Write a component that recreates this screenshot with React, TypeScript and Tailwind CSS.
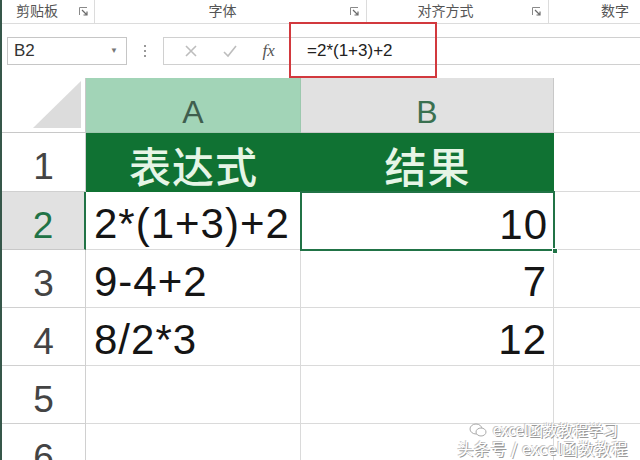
import React from "react";

const GRID = "border-r border-b border-[#dadada]";

function Launcher() {
  return (
    <svg width="9" height="9" viewBox="0 0 9 9" className="shrink-0">
      <path d="M0.5 8V0.5H8" fill="none" stroke="#8a8a8a" strokeWidth="1" />
      <path d="M3 3L8 8M8 4.5V8H4.5" fill="none" stroke="#6a6a6a" strokeWidth="1.2" />
    </svg>
  );
}

function RowHead({ n, active }: { n: number; active?: boolean }) {
  return (
    <div
      className={
        active
          ? "flex items-center justify-center pt-[10px] bg-[#e1e1e1] text-[#217346] border-b border-[#c8c8c8] border-r-2 border-r-[#217346] text-[37px]"
          : "flex items-center justify-center pt-[10px] bg-white text-[#444] border-r border-b border-[#d0d0d0] text-[37px]"
      }
    >
      {n}
    </div>
  );
}

function Cell({ children, right }: { children?: React.ReactNode; right?: boolean }) {
  return (
    <div
      className={`${GRID} flex items-center pt-[6px] text-[42px] tracking-[1px] text-[#151515] ${
        right ? "justify-end pr-[6px]" : "pl-[8px]"
      }`}
    >
      {children}
    </div>
  );
}

export default function App() {
  return (
    <div
      className="relative w-[640px] h-[460px] overflow-hidden bg-white border-l-2 border-[#36574a]"
      style={{ fontFamily: '"Liberation Sans", "Noto Sans CJK SC", sans-serif' }}
    >
      {/* ribbon group labels */}
      <div className="flex h-[24px] border-b border-[#dcdcdc] text-[14px] text-[#555]">
        <div className="w-[93px] flex items-center pl-[14px] pr-[6px] border-r border-[#dcdcdc]">
          <span>剪贴板</span>
          <span className="ml-auto">
            <Launcher />
          </span>
        </div>
        <div className="w-[272px] flex items-center pr-[7px] border-r border-[#dcdcdc]">
          <span className="flex-1 text-center">字体</span>
          <Launcher />
        </div>
        <div className="w-[182px] flex items-center pr-[7px] border-r border-[#dcdcdc]">
          <span className="flex-1 text-center pr-[8px]">对齐方式</span>
          <Launcher />
        </div>
        <div className="flex-1 flex items-center pl-[52px]">
          <span>数字</span>
        </div>
      </div>

      {/* formula bar */}
      <div className="flex items-center h-[54px] pl-[5px]">
        <div className="w-[120px] h-[28px] border border-[#c6c6c6] flex items-center pl-[6px] pr-[8px] text-[17px] text-[#333]">
          <span>B2</span>
          <span className="ml-auto text-[8px] text-[#777]">▼</span>
        </div>
        <div className="w-[36px] flex flex-col items-center gap-[3px]">
          <span className="w-[2px] h-[2px] bg-[#999]" />
          <span className="w-[2px] h-[2px] bg-[#999]" />
          <span className="w-[2px] h-[2px] bg-[#999]" />
        </div>
        <div className="w-[127px] h-[28px] border border-[#d0d0d0] flex items-center justify-around pl-[8px] pr-[2px]">
          <svg width="14" height="14" viewBox="0 0 14 14">
            <path d="M2 2L12 12M12 2L2 12" stroke="#bdbdbd" strokeWidth="1.6" />
          </svg>
          <svg width="16" height="14" viewBox="0 0 16 14">
            <path d="M2 8L6 12L14 2" fill="none" stroke="#bdbdbd" strokeWidth="1.6" />
          </svg>
          <span
            className="italic text-[17px] text-[#555]"
            style={{ fontFamily: '"Liberation Serif", serif' }}
          >
            fx
          </span>
        </div>
        <div className="flex-1 h-[28px] border-t border-b border-l border-[#d0d0d0] flex items-center pl-[16px] text-[17px] text-[#222]">
          =2*(1+3)+2
        </div>
      </div>

      {/* red highlight around the formula */}
      <div className="absolute left-[287px] top-[22px] w-[148px] h-[56px] border-2 border-[#d2393e]" />

      {/* sheet grid */}
      <div className="grid grid-cols-[84px_215px_253px_1fr] grid-rows-[55px_59px_58px_58px_58px_58px_58px]">
        {/* header row */}
        <div className="relative bg-white border-r border-b border-[#c8c8c8]">
          <svg width="48" height="47" viewBox="0 0 48 47" className="absolute right-[4px] bottom-[4px]">
            <path d="M48 0V47H0Z" fill="#dcdcdc" />
          </svg>
        </div>
        <div className="flex items-center justify-center pt-[14px] bg-[#a2d4b7] text-[#3f5e4e] text-[32px] border-r border-b border-[#9cc8ae]">
          A
        </div>
        <div className="flex items-center justify-center pt-[14px] bg-[#e1e1e1] text-[#3a7050] text-[32px] border-r border-b border-[#c8c8c8]">
          B
        </div>
        <div className="bg-white border-b border-[#dadada]" />

        {/* row 1 */}
        <RowHead n={1} />
        <div
          className="flex items-center justify-center pt-[4px] bg-[#107233] text-[#e6f5e6] text-[42px] font-medium tracking-[1px]"
          style={{ fontFamily: '"Noto Sans CJK SC", sans-serif' }}
        >
          表达式
        </div>
        <div
          className="flex items-center justify-center pt-[4px] bg-[#107233] text-[#e6f5e6] text-[42px] font-medium tracking-[1px]"
          style={{ fontFamily: '"Noto Sans CJK SC", sans-serif' }}
        >
          结果
        </div>
        <div className="border-b border-[#dadada]" />

        {/* row 2 */}
        <RowHead n={2} active />
        <Cell>2*(1+3)+2</Cell>
        <div className="relative flex items-center justify-end pt-[6px] pr-[6px] text-[42px] tracking-[1px] text-[#151515]">
          10
          <div className="absolute -left-px -top-px -right-px -bottom-px border-2 border-[#217346]" />
          <div className="absolute -right-[4px] -bottom-[4px] w-[6px] h-[6px] bg-[#217346] border border-white" />
        </div>
        <div className="border-b border-[#dadada]" />

        {/* row 3 */}
        <RowHead n={3} />
        <Cell>9-4+2</Cell>
        <Cell right>7</Cell>
        <div className="border-b border-[#dadada]" />

        {/* row 4 */}
        <RowHead n={4} />
        <Cell>8/2*3</Cell>
        <Cell right>12</Cell>
        <div className="border-b border-[#dadada]" />

        {/* row 5 */}
        <RowHead n={5} />
        <Cell />
        <Cell />
        <div className="border-b border-[#dadada]" />

        {/* row 6 */}
        <RowHead n={6} />
        <Cell />
        <Cell />
        <div className="border-b border-[#dadada]" />
      </div>

      {/* watermark */}
      <div
        className="absolute right-[12px] bottom-[3px] flex flex-col items-end text-white leading-[18px] [text-shadow:1px_1px_0_#9a9a9a,-1px_-1px_0_#c8c8c8]"
        style={{ fontFamily: '"Noto Sans CJK SC", sans-serif' }}
      >
        <div className="flex items-center gap-[6px] text-[15px] pr-[10px]">
          <svg width="18" height="14" viewBox="0 0 18 14">
            <ellipse cx="7" cy="6" rx="6" ry="5" fill="none" stroke="#aaa" strokeWidth="1" />
            <ellipse cx="12" cy="9" rx="5" ry="4" fill="white" stroke="#aaa" strokeWidth="1" />
          </svg>
          <span>excel函数教程学习</span>
        </div>
        <div className="text-[16px] tracking-[0.5px]">头条号 / excel函数教程</div>
      </div>
    </div>
  );
}
